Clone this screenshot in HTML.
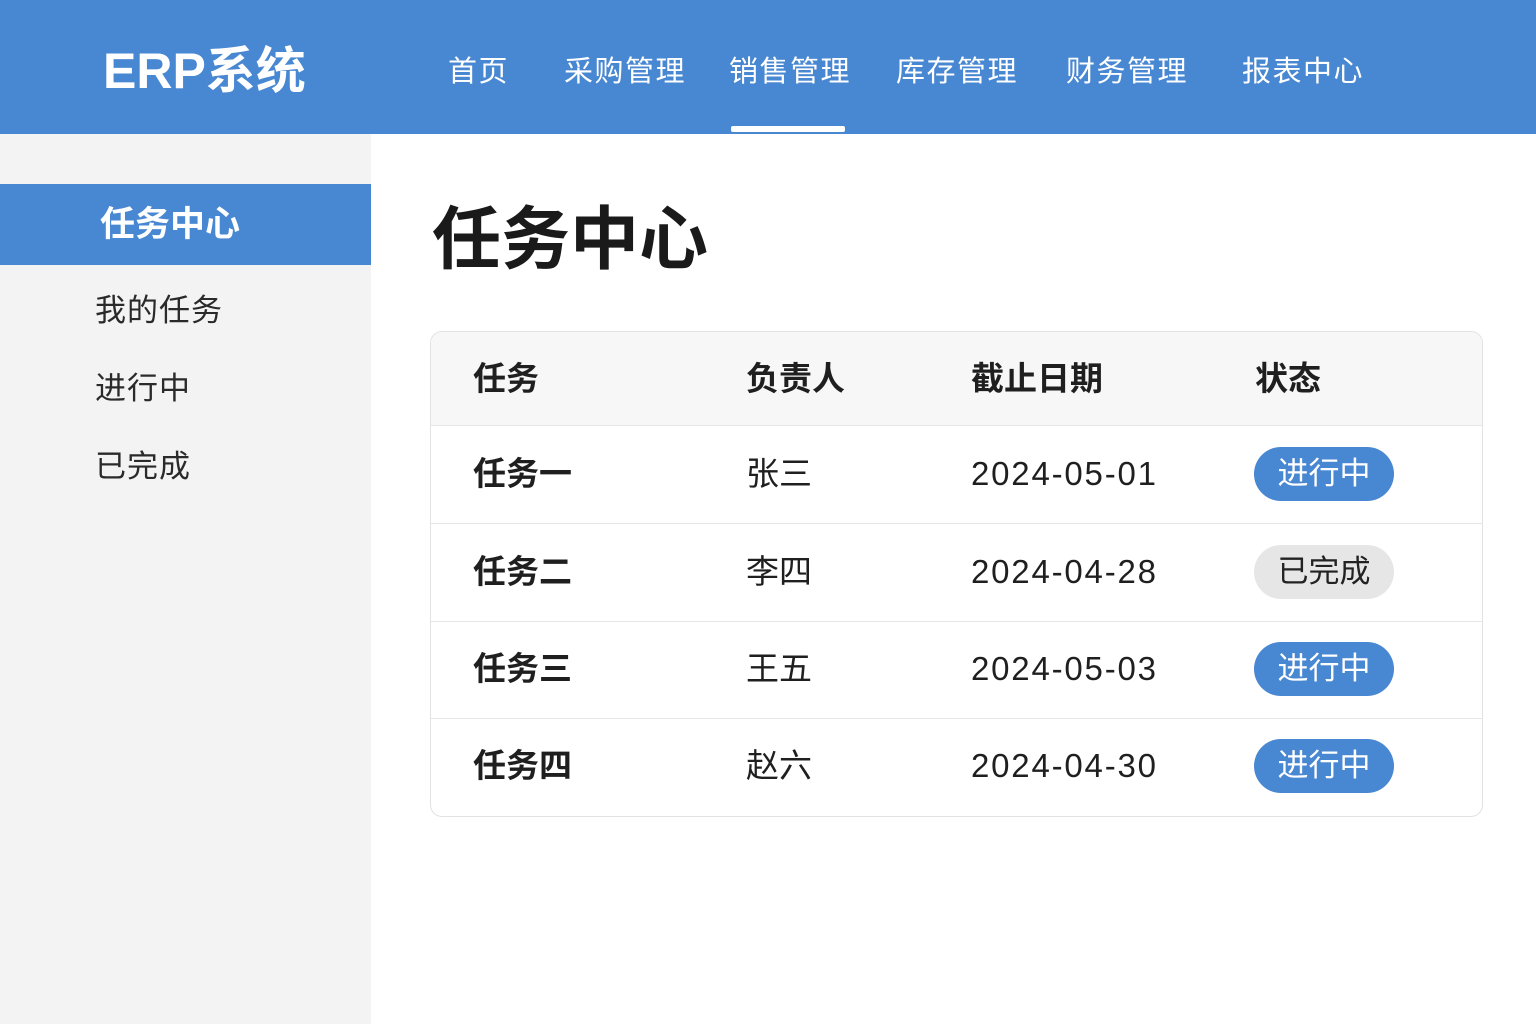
<!DOCTYPE html>
<html><head><meta charset="utf-8"><style>
*{margin:0;padding:0;box-sizing:border-box}
body{width:1536px;height:1024px;overflow:hidden;background:#fff;font-family:"Liberation Sans","Noto Sans CJK SC",sans-serif;color:#1f1f1f;position:relative}
.hdr{position:absolute;left:0;top:0;width:1536px;height:134px;background:#4887d1}
.logo{position:absolute;left:103px;top:40px;font-size:50px;font-weight:bold;color:#fff;line-height:62px}
.nav{position:absolute;top:52px;font-size:29px;color:#fff;line-height:40px;letter-spacing:1.5px}
.ul{position:absolute;left:731px;top:126px;width:114px;height:6px;background:#fff;border-radius:2px}
.side{position:absolute;left:0;top:134px;width:371px;height:890px;background:#f3f3f3}
.act{position:absolute;left:0;top:184px;width:371px;height:81px;background:#4887d1;color:#fff;font-size:35px;font-weight:bold;padding-left:100px;line-height:81px}
.si{position:absolute;left:95px;font-size:31px;color:#2a2a2a;line-height:40px;letter-spacing:1px}
h1{position:absolute;left:432px;top:197px;font-size:69px;font-weight:bold;line-height:86px;color:#1a1a1a}
.tbl{position:absolute;left:430px;top:331px;width:1053px;height:486px;border:1px solid #e2e2e2;border-radius:12px;overflow:hidden}
.row{position:absolute;left:0;width:1053px;border-top:1px solid #e6e6e6}
.c{position:absolute;font-size:33px;line-height:40px}
.d{letter-spacing:1.8px}
.b{position:absolute;left:823px;width:140px;height:54px;border-radius:27px;font-size:31px;line-height:54px;text-align:center;color:#fff;background:#4887d1}
.g{background:#e6e6e6;color:#222}
</style></head><body>
<div class="hdr">
<div class="logo">ERP系统</div>
<div class="nav" style="left:448px">首页</div>
<div class="nav" style="left:564px">采购管理</div>
<div class="nav" style="left:729px">销售管理</div>
<div class="nav" style="left:896px">库存管理</div>
<div class="nav" style="left:1066px">财务管理</div>
<div class="nav" style="left:1242px">报表中心</div>
<div class="ul"></div>
</div>
<div class="side"></div>
<div class="act">任务中心</div>
<div class="si" style="top:291px">我的任务</div>
<div class="si" style="top:369px">进行中</div>
<div class="si" style="top:447px">已完成</div>
<h1>任务中心</h1>
<div class="tbl">
<div class="row" style="top:0;height:93px;background:#f7f7f7;border-top:none">
<div class="c" style="left:42px;top:27px;font-weight:bold">任务</div>
<div class="c" style="left:315px;top:27px;font-weight:bold">负责人</div>
<div class="c" style="left:540px;top:27px;font-weight:bold">截止日期</div>
<div class="c" style="left:824px;top:27px;font-weight:bold">状态</div>
</div>
<div class="row" style="top:93px;height:98px">
<div class="c" style="left:42px;top:28px;font-weight:bold">任务一</div>
<div class="c" style="left:315px;top:28px">张三</div>
<div class="c d" style="left:540px;top:28px">2024-05-01</div>
<div class="b" style="top:21px">进行中</div>
</div>
<div class="row" style="top:191px;height:98px">
<div class="c" style="left:42px;top:28px;font-weight:bold">任务二</div>
<div class="c" style="left:315px;top:28px">李四</div>
<div class="c d" style="left:540px;top:28px">2024-04-28</div>
<div class="b g" style="top:21px">已完成</div>
</div>
<div class="row" style="top:289px;height:97px">
<div class="c" style="left:42px;top:27px;font-weight:bold">任务三</div>
<div class="c" style="left:315px;top:27px">王五</div>
<div class="c d" style="left:540px;top:27px">2024-05-03</div>
<div class="b" style="top:20px">进行中</div>
</div>
<div class="row" style="top:386px;height:100px">
<div class="c" style="left:42px;top:27px;font-weight:bold">任务四</div>
<div class="c" style="left:315px;top:27px">赵六</div>
<div class="c d" style="left:540px;top:27px">2024-04-30</div>
<div class="b" style="top:20px">进行中</div>
</div>
</div>
</body></html>
